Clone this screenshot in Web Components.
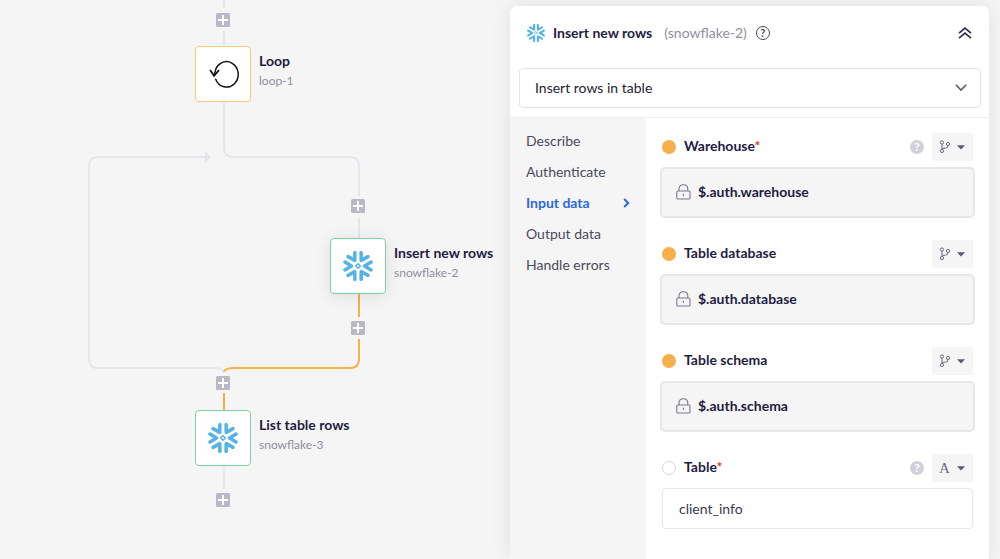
<!DOCTYPE html>
<html lang="en">
<head>
<meta charset="utf-8">
<title>Workflow editor</title>
<style>
  :root {
    --ink: #1f1c42;
    --muted: #908e9d;
    --text: #4c4a5d;
    --wire: #e6e6ea;
    --amber: #f5b04b;
    --surface: #f5f5f5;
    --blue: #2a68e0;
  }
  body {
    margin: 0;
    background: var(--surface);
    color: var(--ink);
    font: 14px/20px Lato, "Open Sans", sans-serif;
  }
</style>
</head>
<body>
<workflow-app></workflow-app>

<script>
const define = (name, html, setup) => {
  const template = document.createElement('template');
  template.innerHTML = `<style>
    * { box-sizing: border-box; }
    button, input, select { font: inherit; color: inherit; margin: 0; }
    button { padding: 0; border: 0; background: none; cursor: pointer; }
    svg { display: block; }
  </style>${html}`;
  customElements.define(name, class extends HTMLElement {
    constructor() {
      super();
      this.attachShadow({ mode: 'open' }).append(template.content.cloneNode(true));
    }
    connectedCallback() { if (setup) setup(this, this.shadowRoot); }
  });
};

define('snow-icon', `
  <style>
    :host { display: block; width: 30px; height: 30px; }
    svg { width: 100%; height: 100%; }
  </style>
  <svg viewBox="-46 -46 92 92" fill="none" stroke="#56b3e6" stroke-width="11" stroke-linecap="round" stroke-linejoin="round" aria-hidden="true">
    <path d="M40 -12L20 0L40 12"/>
    <path d="M40 -12L20 0L40 12" transform="rotate(60)"/>
    <path d="M40 -12L20 0L40 12" transform="rotate(120)"/>
    <path d="M40 -12L20 0L40 12" transform="rotate(180)"/>
    <path d="M40 -12L20 0L40 12" transform="rotate(240)"/>
    <path d="M40 -12L20 0L40 12" transform="rotate(300)"/>
    <path d="M0 -7L7 0L0 7L-7 0Z" stroke-width="5"/>
  </svg>`);

define('loop-icon', `
  <style>:host { display: block; }</style>
  <svg width="32" height="32" viewBox="-1 1 32 32" fill="none" stroke="#151515" stroke-width="1.5" stroke-linecap="round" aria-hidden="true">
    <path d="M7.7 22.2A11.7 12.7 0 1 0 6.9 15.8L6.2 18.6"/>
    <path d="M2.4 13.4L6.1 18.8L10.6 13.6" stroke-width="1.8"/>
  </svg>`);

define('add-step', `
  <style>
    :host { position: absolute; transform: translate(-50%, -50%); }
    button { display: block; }
  </style>
  <button aria-label="Add step">
    <svg width="14" height="14" viewBox="0 0 14 14"><rect width="14" height="14" rx="1.5" fill="#b9b8c7"/><path d="M7 2V12M2 7H12" stroke="#fff" stroke-width="2"/></svg>
  </button>`);

define('flow-node', `
  <style>
    :host { position: absolute; display: flex; align-items: flex-start; gap: 8px; white-space: nowrap; }
    .tile {
      width: 56px; height: 56px; display: grid; place-items: center;
      background: #fff; border: 1px solid #7fd3a3; border-radius: 4px;
    }
    :host([kind="loop"]) .tile { border-color: #f8c97f; }
    :host([selected]) .tile { box-shadow: 0 2px 16px rgba(0, 0, 0, .1); }
    .text { padding-top: 5px; }
    .name { font-weight: 700; }
    .id { font-size: 12px; color: var(--muted); }
  </style>
  <div class="tile"><slot name="icon"></slot></div>
  <div class="text"><div class="name"><slot></slot></div><div class="id"><slot name="id"></slot></div></div>`);

define('flow-canvas', `
  <style>
    :host { position: relative; display: block; min-height: 520px; }
    .wires { position: absolute; left: 0; top: 0; overflow: visible; }
  </style>
  <svg class="wires" width="480" height="520" fill="none" stroke="#e6e6ea" stroke-width="2" aria-hidden="true">
    <path d="M224 0V8M224 31V47M224 102V148Q224 157 233 157H350Q359 157 359 166V196M359 217V238M224 466V489"/>
    <path d="M206 157H98Q89 157 89 166V359Q89 368 98 368H214Q222 368 224 372"/>
    <path d="M205 151L211 157L205 163Z" fill="#e6e6ea" stroke="none"/>
    <path stroke="#f5b04b" d="M359 294V317M359 339V359Q359 368 350 368H234Q225 368 224 372M224 393V411"/>
  </svg>
  <flow-node kind="loop" style="left:195px;top:46px"><loop-icon slot="icon"></loop-icon>Loop<span slot="id">loop-1</span></flow-node>
  <flow-node selected style="left:330px;top:238px"><snow-icon slot="icon"></snow-icon>Insert new rows<span slot="id">snowflake-2</span></flow-node>
  <flow-node style="left:195px;top:410px"><snow-icon slot="icon"></snow-icon>List table rows<span slot="id">snowflake-3</span></flow-node>
  <add-step style="left:223px;top:20px"></add-step>
  <add-step style="left:358px;top:206px"></add-step>
  <add-step style="left:358px;top:328px"></add-step>
  <add-step style="left:223px;top:383px"></add-step>
  <add-step style="left:223px;top:500px"></add-step>`);

define('panel-header', `
  <style>
    :host { display: block; padding: 14px 8px 9px 9px; border-bottom: 1px solid #f0f0f0; }
    header { display: flex; align-items: center; padding: 0 9px 0 8px; height: 26px; margin-bottom: 22px; }
    snow-icon { width: 18px; height: 18px; }
    h1 { margin: 0 12px 0 8px; font-size: 14px; line-height: 20px; }
    .id { color: var(--muted); }
    .help { width: 14px; height: 14px; margin-left: 9px; border: 1px solid var(--text); border-radius: 50%; font-size: 11px; font-weight: 700; line-height: 12px; text-align: center; color: var(--text); }
    .fold { margin-left: auto; }
    .pick { position: relative; display: block; }
    select { appearance: none; display: block; width: 100%; height: 40px; padding: 0 15px; border: 1px solid #e4e4e6; border-radius: 4px; background: #fff; color: #242330; }
    .pick svg { position: absolute; right: 14px; top: 15px; pointer-events: none; }
  </style>
  <header>
    <snow-icon></snow-icon>
    <h1>Insert new rows</h1><span class="id">(snowflake-2)</span>
    <button class="help" aria-label="Help">?</button>
    <button class="fold" aria-label="Collapse panel">
      <svg width="14" height="14" viewBox="0 0 14 14" fill="none" stroke="#302d4d" stroke-width="1.7"><path d="M1 7.2L7 2L13 7.2M1 12.2L7 7L13 12.2"/></svg>
    </button>
  </header>
  <label class="pick">
    <select aria-label="Operation"><option>Insert rows in table</option></select>
    <svg width="12" height="10" viewBox="0 0 12 10" fill="none" stroke="#5d5b70" stroke-width="1.6"><path d="M.8 1.8L6 7L11.2 1.8"/></svg>
  </label>`);

define('panel-nav', `
  <style>
    :host { display: block; background: var(--surface); padding: 7px 16px; }
    nav { display: grid; }
    a { display: flex; align-items: center; justify-content: space-between; height: 31px; color: var(--text); text-decoration: none; }
    a[aria-current] { color: var(--blue); font-weight: 700; }
  </style>
  <nav aria-label="Step settings">
    <a href="#describe">Describe</a>
    <a href="#authenticate">Authenticate</a>
    <a href="#input" aria-current="page">Input data
      <svg width="7" height="10" viewBox="0 0 7 10" fill="none" stroke="#2a68e0" stroke-width="2"><path d="M1.2 1L5.2 5L1.2 9"/></svg></a>
    <a href="#output">Output data</a>
    <a href="#errors">Handle errors</a>
  </nav>`);

define('data-field', `
  <style>
    :host { display: block; }
    .head { display: flex; align-items: center; height: 28px; margin: 0 2px 6px; }
    .dot { width: 14px; height: 14px; margin-right: 8px; border-radius: 50%; background: var(--amber); }
    label { font-weight: 700; padding-bottom: 2px; }
    .star { color: #cf4238; display: none; }
    .help { display: none; width: 14px; height: 14px; border-radius: 50%; background: #d2d1db; color: #fff; font-size: 12px; font-weight: 700; line-height: 14px; text-align: center; }
    :host([required]) .star { display: inline; }
    :host([required]) .help { display: block; }
    .type { display: flex; align-items: center; justify-content: space-between; width: 41px; height: 28px; margin-left: 8px; padding: 0 8px 0 7px; background: var(--surface); color: #6d6b7d; }
    .end { display: flex; align-items: center; margin-left: auto; }
    .letter { font: 15px/20px "Liberation Serif", serif; }
    .box { display: flex; align-items: center; gap: 7px; height: 51px; padding: 0 14px 2px; border: 2px solid #e7e7e8; border-radius: 5px; background: var(--surface); }
    input { flex: 1; min-width: 0; padding: 0; border: 0; outline: 0; background: none; font-weight: 700; }
    .letter, :host([plain]) .branch, :host([plain]) .lock { display: none; }
    :host([plain]) .letter { display: block; }
    :host([plain]) .dot { background: #fff; border: 1px solid #d6d5de; }
    :host([plain]) .box { height: 41px; margin: 0 2px; padding: 0 16px; border-width: 1px; border-radius: 4px; background: #fff; }
    :host([plain]) input { font-weight: 400; color: #3c3950; }
  </style>
  <div class="head">
    <span class="dot"></span>
    <label for="value"><slot></slot><span class="star">*</span></label>
    <div class="end">
      <button class="help" aria-label="Help">?</button>
      <button class="type" aria-label="Value type">
        <svg class="branch" width="12" height="14" viewBox="0 0 12 14" fill="none" stroke="#6d6b7d"><circle cx="3" cy="2.5" r="1.6"/><circle cx="3" cy="11" r="1.6"/><circle cx="9" cy="4" r="1.6"/><path d="M3 4.1V9.4M9 5.6Q9 8.2 6.5 8.2H5Q3 8.2 3 9.4"/></svg>
        <span class="letter">A</span>
        <svg width="8" height="5" viewBox="0 0 8 5"><path d="M0 .3H8L4 4.6Z" fill="#5d5a70"/></svg>
      </button>
    </div>
  </div>
  <div class="box">
    <svg class="lock" width="15" height="16" viewBox="0 0 15 16" fill="none" stroke="#7c7a8a" stroke-width="1.1"><rect x=".8" y="7" width="13.2" height="8" rx="1"/><path d="M3 7V5.2Q3 .8 7.4 .8T11.8 5.2V7M7.4 9.8V12"/></svg>
    <input id="value">
  </div>`, (host, root) => {
  const input = root.querySelector('input');
  input.value = host.getAttribute('value');
  input.readOnly = !host.hasAttribute('plain');
});

define('step-panel', `
  <style>
    :host { display: flex; flex-direction: column; background: #fff; border-radius: 7px 7px 0 0; overflow: hidden; box-shadow: 0 0 20px rgba(0, 0, 0, .09); }
    .body { flex: 1; display: grid; grid-template-columns: 136px minmax(0, 1fr); }
    form { display: grid; align-content: start; gap: 22px; padding: 15px 14px 30px; }
  </style>
  <panel-header></panel-header>
  <div class="body">
    <panel-nav></panel-nav>
    <form>
      <data-field required value="$.auth.warehouse">Warehouse</data-field>
      <data-field value="$.auth.database">Table database</data-field>
      <data-field value="$.auth.schema">Table schema</data-field>
      <data-field required plain value="client_info">Table</data-field>
    </form>
  </div>`);

define('workflow-app', `
  <style>
    :host { display: grid; grid-template-columns: minmax(0, 1fr) 479px; min-height: 100vh; padding-right: 11px; box-sizing: border-box; }
    step-panel { margin-top: 6px; }
  </style>
  <flow-canvas></flow-canvas>
  <step-panel></step-panel>`);
</script>
</body>
</html>
